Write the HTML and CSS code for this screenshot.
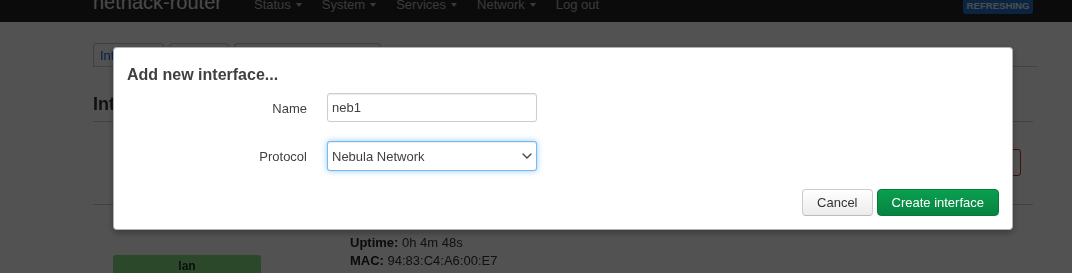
FILE: index.html
```html
<!DOCTYPE html>
<html lang="en">
<head>
<meta charset="utf-8">
<title>nethack-router - Interfaces</title>
<link rel="stylesheet" href="styles.css">
</head>
<body>
<div class="page">
  <header class="navbar">
    <div class="nav-inner">
      <a class="brand">nethack-router</a>
      <ul class="nav">
        <li>Status<span class="caret"></span></li>
        <li>System<span class="caret"></span></li>
        <li>Services<span class="caret"></span></li>
        <li>Network<span class="caret"></span></li>
        <li>Log out</li>
      </ul>
      <span class="badge">REFRESHING</span>
    </div>
  </header>
  <main class="container">
    <ul class="tabs">
      <li class="active">Interfaces</li>
      <li>Devices</li>
      <li>Global network options</li>
    </ul>
    <h2 class="title">Interfaces</h2>
    <div class="table">
      <div class="trow trow-first">
        <span class="btn-remove"></span>
      </div>
      <div class="trow trow-iface">
        <div class="ifbadge">lan</div>
        <div class="ifinfo">
          <div><b>Uptime:</b> 0h 4m 48s</div>
          <div><b>MAC:</b> 94:83:C4:A6:00:E7</div>
        </div>
      </div>
    </div>
  </main>
</div>

<div class="overlay">
  <div class="modal">
    <h4 class="modal-title">Add new interface...</h4>
    <div class="form">
      <div class="frow">
        <label class="flabel" for="ifname">Name</label>
        <input class="finput" id="ifname" type="text" value="neb1">
      </div>
      <div class="frow frow-gap">
        <label class="flabel" for="proto">Protocol</label>
        <span class="select-wrap">
          <select class="fselect" id="proto">
            <option>Nebula Network</option>
          </select>
          <svg class="chev" width="10" height="6" viewBox="0 0 10 6" aria-hidden="true"><path d="M1 1 L5 5 L9 1" fill="none" stroke="#404040" stroke-width="1.3" stroke-linecap="round" stroke-linejoin="round"/></svg>
        </span>
      </div>
    </div>
    <div class="actions">
      <button class="btn btn-cancel">Cancel</button>
      <button class="btn btn-create">Create interface</button>
    </div>
  </div>
</div>
</body>
</html>
```

FILE: styles.css
```css
html, body {
  margin: 0;
  padding: 0;
}
body {
  font-family: "Liberation Sans", Arial, sans-serif;
  font-size: 13px;
  color: #404040;
  background: #fff;
  overflow: hidden;
  height: 273px;
}

.page {
  margin-top: -18px;
  height: 291px;
  overflow: hidden;
  filter: blur(0.6px);
}

/* navbar */
.navbar {
  height: 40px;
  background: #252525;
  overflow: hidden;
}
.nav-inner {
  width: 940px;
  margin-left: 93px;
  display: flex;
  align-items: baseline;
  line-height: 40px;
}
.brand {
  font-size: 20px;
  color: #e6e6e6;
  padding-right: 22px;
}
.nav {
  list-style: none;
  margin: 0;
  padding: 0;
  display: flex;
  align-items: baseline;
}
.nav li {
  padding: 0 10px;
  color: #b5b5b5;
}
.caret {
  display: inline-block;
  width: 0;
  height: 0;
  margin-left: 5px;
  margin-bottom: 2px;
  border-top: 4px solid #b5b5b5;
  border-left: 3.5px solid transparent;
  border-right: 3.5px solid transparent;
}
.badge {
  margin-left: auto;
  font-size: 9.6px;
  font-weight: bold;
  line-height: 14px;
  padding: 1px 3.5px;
  background: #1f70cc;
  color: #e8eef6;
  border-radius: 3px;
}

/* page content */
.container {
  width: 940px;
  margin-left: 93px;
}
.tabs {
  list-style: none;
  margin: 21px -5px 0 0;
  padding: 0;
  display: flex;
  gap: 5px;
  border-bottom: 1px solid #cfcfcf;
}
.tabs li {
  border: 1px solid #c4c4c4;
  border-bottom: none;
  border-radius: 4px 4px 0 0;
  padding: 2px 6px 0;
  line-height: 20px;
  color: #0069d6;
}
.tabs li.active {
  background: #fff;
  color: #0069d6;
}
.title {
  margin: 25px 0 0;
  font-size: 18px;
  line-height: 24px;
  font-weight: bold;
  color: #333333;
  padding-bottom: 5px;
  border-bottom: 1px solid #cccccc;
}
.trow {
  border-bottom: 1px solid #cccccc;
}
.trow-first {
  height: 82px;
  display: flex;
  justify-content: flex-end;
  align-items: flex-start;
}
.btn-remove {
  display: block;
  width: 60px;
  height: 25px;
  margin-top: 27px;
  margin-right: 12px;
  border: 1px solid #c9302c;
  border-radius: 3px;
  background: #fff;
}
.trow-iface {
  display: flex;
  align-items: flex-start;
  padding-left: 20px;
  height: 80px;
  border-bottom: none;
}
.ifbadge {
  width: 148px;
  height: 40px;
  margin-top: 50px;
  background: #86e086;
  border-radius: 3px 3px 0 0;
  text-align: center;
  font-size: 12px;
  font-weight: bold;
  line-height: 16px;
  padding-top: 3px;
  box-sizing: border-box;
  color: #2a2a2a;
}
.ifinfo {
  margin-left: 89px;
  padding-top: 29px;
  line-height: 18px;
  color: #333333;
}
.ifinfo b {
  color: #222;
}

/* modal overlay */
.overlay {
  position: fixed;
  top: 0;
  left: 0;
  right: 0;
  bottom: 0;
  background: rgba(0, 0, 0, 0.68);
  padding: 47px 0 0 113px;
}
.modal {
  width: 900px;
  box-sizing: border-box;
  background: #fff;
  border: 1px solid rgba(0, 0, 0, 0.3);
  border-radius: 4px;
  box-shadow: 0 3px 7px rgba(0, 0, 0, 0.3);
  padding: 13px;
}
.modal-title {
  margin: 4px 0 0;
  font-size: 16px;
  line-height: 20px;
  font-weight: bold;
  color: #404040;
}
.form {
  margin-top: 8px;
}
.frow {
  display: flex;
  align-items: center;
}
.frow-gap {
  margin-top: 19px;
}
.flabel {
  width: 200px;
  box-sizing: border-box;
  padding: 2px 20px 0 0;
  text-align: right;
  line-height: 18px;
  color: #404040;
}
.finput {
  width: 210px;
  height: 29px;
  box-sizing: border-box;
  margin: 0;
  padding: 0 4px;
  border: 1px solid #cccccc;
  border-radius: 3px;
  box-shadow: inset 0 1px 1px rgba(0, 0, 0, 0.075);
  font-family: "Liberation Sans", Arial, sans-serif;
  font-size: 13px;
  color: #404040;
  outline: none;
}
.select-wrap {
  position: relative;
  display: block;
  width: 210px;
  height: 30px;
}
.fselect {
  -webkit-appearance: none;
  appearance: none;
  display: block;
  width: 210px;
  height: 30px;
  box-sizing: border-box;
  margin: 0;
  padding: 0 20px 0 4px;
  border: 1px solid rgba(82, 168, 236, 0.8);
  border-radius: 3px;
  background: #fff;
  box-shadow: inset 0 1px 1px rgba(0, 0, 0, 0.075), 0 0 6px rgba(82, 168, 236, 0.6);
  font-family: "Liberation Sans", Arial, sans-serif;
  font-size: 13px;
  color: #404040;
  outline: none;
}
.chev {
  position: absolute;
  left: 195px;
  top: 12px;
  pointer-events: none;
}
.actions {
  margin-top: 18px;
  display: flex;
  justify-content: flex-end;
  gap: 4px;
}
.btn {
  height: 27px;
  box-sizing: border-box;
  margin: 0;
  padding: 0 14px;
  border-radius: 4px;
  font-family: "Liberation Sans", Arial, sans-serif;
  font-size: 13px;
  line-height: 25px;
}
.btn-cancel {
  color: #333;
  background: linear-gradient(#ffffff, #f7f7f7 40%, #ececec);
  border: 1px solid #cccccc;
  border-bottom-color: #bbbbbb;
}
.btn-create {
  color: #fff;
  background: linear-gradient(#0a9f50, #07833f);
  border: 1px solid #077a3a;
}
```
